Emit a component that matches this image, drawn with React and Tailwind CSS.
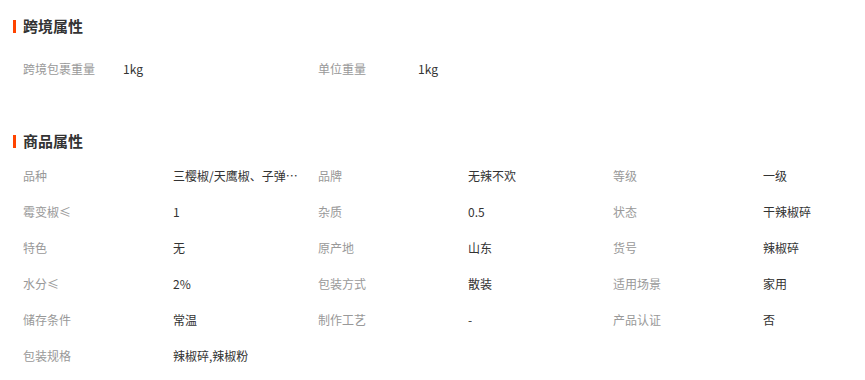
import React from "react";

const font = { fontFamily: '"Microsoft YaHei", "Noto Sans CJK SC", "Noto Sans", sans-serif' };

function Heading({ children, className }) {
  return (
    <div className={`flex items-center h-[20px] ${className}`}>
      <span className="w-[3px] h-[13px] bg-[#ff4400] ml-[13px]" />
      <span className="ml-[7px] text-[15px] font-bold text-[#333] leading-[20px]">{children}</span>
    </div>
  );
}

const cross = [
  ["跨境包裹重量", "1kg"],
  ["单位重量", "1kg"],
];

const goods = [
  ["品种", "三樱椒/天鹰椒、子弹头、朝天椒"],
  ["品牌", "无辣不欢"],
  ["等级", "一级"],
  ["霉变椒≤", "1"],
  ["杂质", "0.5"],
  ["状态", "干辣椒碎"],
  ["特色", "无"],
  ["原产地", "山东"],
  ["货号", "辣椒碎"],
  ["水分≤", "2%"],
  ["包装方式", "散装"],
  ["适用场景", "家用"],
  ["储存条件", "常温"],
  ["制作工艺", "-"],
  ["产品认证", "否"],
  ["包装规格", "辣椒碎,辣椒粉"],
];

export default function App() {
  return (
    <div className="w-[865px] h-[380px] bg-white overflow-hidden" style={font}>
      <Heading className="mt-[16px]">跨境属性</Heading>
      <div className="flex pl-[23px] mt-[15px]">
        {cross.map(([l, v]) => (
          <div key={l} className="flex items-center h-[36px] w-[295px] text-[12px]">
            <span className="text-[#999] shrink-0 w-[100px]">{l}</span>
            <span className="text-[#333]">{v}</span>
          </div>
        ))}
      </div>
      <Heading className="mt-[44px]">商品属性</Heading>
      <div className="grid grid-cols-[295px_295px_295px] pl-[23px] mt-[7px]">
        {goods.map(([l, v]) => (
          <div key={l} className="flex items-center h-[36px] text-[12px]">
            <span className="text-[#999] shrink-0 w-[150px]">{l}</span>
            <span className="text-[#333] truncate max-w-[126px]">{v}</span>
          </div>
        ))}
      </div>
    </div>
  );
}
